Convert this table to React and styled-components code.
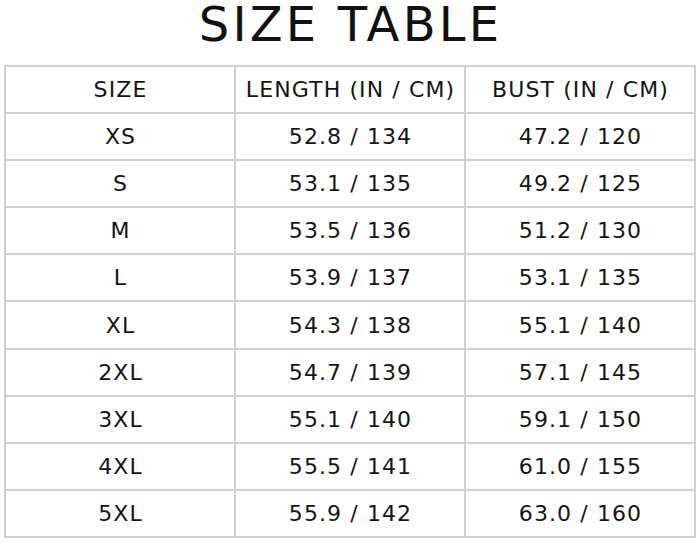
import React from 'react'
import styled, { createGlobalStyle } from 'styled-components'

const GlobalStyle = createGlobalStyle`
  html, body {
    margin: 0;
    padding: 0;
    background: #ffffff;
  }
`

const rows = [
  ['XS', '52.8 / 134', '47.2 / 120'],
  ['S', '53.1 / 135', '49.2 / 125'],
  ['M', '53.5 / 136', '51.2 / 130'],
  ['L', '53.9 / 137', '53.1 / 135'],
  ['XL', '54.3 / 138', '55.1 / 140'],
  ['2XL', '54.7 / 139', '57.1 / 145'],
  ['3XL', '55.1 / 140', '59.1 / 150'],
  ['4XL', '55.5 / 141', '61.0 / 155'],
  ['5XL', '55.9 / 142', '63.0 / 160'],
]

const Page = styled.div`
  width: 700px;
  height: 542px;
  padding: 0 6px 0 4px;
  box-sizing: border-box;
  font-family: 'DejaVu Sans', 'Liberation Sans', sans-serif;
  color: #141414;
`

const Title = styled.h1`
  margin: 0 0 17px;
  padding-left: 3px;
  font-size: 48px;
  font-weight: 400;
  line-height: 48px;
  letter-spacing: 3.2px;
  text-align: center;
  color: #111111;
`

const Table = styled.table`
  width: 690px;
  border-collapse: collapse;
  table-layout: fixed;
`

const Row = styled.tr`
  height: 47.1px;
`

const Cell = styled.td`
  border: 2px solid #d0d0d0;
  padding: 0 0 0 1px;
  text-align: center;
  vertical-align: middle;
  font-size: 22px;
  font-weight: 400;
  letter-spacing: 1.1px;
  white-space: nowrap;
`

export default function App() {
  return (
    <Page>
      <GlobalStyle />
      <Title>SIZE TABLE</Title>
      <Table>
        <colgroup>
          <col style={{ width: 230 }} />
          <col style={{ width: 230 }} />
          <col style={{ width: 230 }} />
        </colgroup>
        <tbody>
          <Row>
            <Cell>SIZE</Cell>
            <Cell>LENGTH (IN / CM)</Cell>
            <Cell>BUST (IN / CM)</Cell>
          </Row>
          {rows.map(r => (
            <Row key={r[0]}>
              <Cell>{r[0]}</Cell>
              <Cell>{r[1]}</Cell>
              <Cell>{r[2]}</Cell>
            </Row>
          ))}
        </tbody>
      </Table>
    </Page>
  )
}
